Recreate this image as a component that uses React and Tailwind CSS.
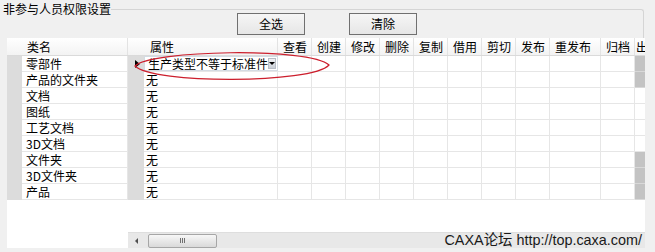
import React from "react";

const rows = ["零部件", "产品的文件夹", "文档", "图纸", "工艺文档", "3D文档", "文件夹", "3D文件夹", "产品"];

// permission columns, widths written out so Tailwind picks them up
const permCols = [
    { label: "查看", w: "w-[34px]" },
    { label: "创建", w: "w-[34px]" },
    { label: "修改", w: "w-[34px]" },
    { label: "删除", w: "w-[34px]" },
    { label: "复制", w: "w-[34px]" },
    { label: "借用", w: "w-[34px]" },
    { label: "剪切", w: "w-[34px]" },
    { label: "发布", w: "w-[34px]" },
    { label: "重发布", w: "w-[51px]" },
    { label: "归档", w: "w-[34px]" },
];

// rows where the clipped last column shows grey
const greyTail = [0, 1, 6, 7, 8];

function Button({ children }) {
    return (
        <button className="w-[68px] h-[22px] border border-[#707070] bg-gradient-to-b from-[#f6f6f6] to-[#e6e6e6] text-[12px] leading-[20px] text-black">
            {children}
        </button>
    );
}

export default function App() {
    return (
        <div className="relative w-[655px] h-[252px] bg-[#f0f0f0] overflow-hidden font-['Noto_Sans_CJK_SC',sans-serif] text-black text-[12px]">
            {/* group box header */}
            <div className="flex h-[38px]">
                <span className="ml-[3px] mt-[1px] leading-[16px] whitespace-nowrap">非参与人员权限设置</span>
                <div className="flex-1 mr-[11px] mt-[9px] border-t border-r border-[#d5d5d5] rounded-tr-[3px]">
                    <div className="flex gap-[44px] pl-[126px] pt-[3px]">
                        <Button>全选</Button>
                        <Button>清除</Button>
                    </div>
                </div>
            </div>

            {/* grid */}
            <div className="ml-[7px] w-[638px] h-[210px] bg-white flex flex-col overflow-hidden">
                <div className="flex h-[18px] shrink-0 bg-gradient-to-b from-white to-[#f3f3f3] border-b border-[#dadada] leading-[18px]">
                    <div className="w-[121px] shrink-0 pl-[20px] border-r border-[#e3e3e3]">类名</div>
                    <div className="w-[150px] shrink-0 pl-[22px] border-r border-[#e3e3e3]">属性</div>
                    {permCols.map((c) => (
                        <div key={c.label} className={`${c.w} shrink-0 pl-[5px] border-r border-[#e3e3e3] whitespace-nowrap`}>
                            {c.label}
                        </div>
                    ))}
                    <div className="w-[10px] shrink-0 pl-[1px] overflow-hidden whitespace-nowrap">出库</div>
                </div>

                {rows.map((name, i) => (
                    <div key={name} className="flex h-[16px] shrink-0 leading-[16px]">
                        <div className="w-[15px] shrink-0 bg-[#dcdcdc]" />
                        <div className="w-[106px] shrink-0 pl-[4px] border-r border-b border-[#e6e6e6] whitespace-nowrap">{name}</div>
                        <div className="w-[16px] shrink-0 bg-[#dcdcdc] flex items-center pl-[7px]">
                            {i === 0 && (
                                <span className="w-0 h-0 border-y-[4px] border-y-transparent border-l-[5px] border-l-black" />
                            )}
                        </div>
                        {i === 0 ? (
                            <div className="w-[134px] shrink-0 flex items-center border-b border-[#e6e6e6]">
                                <div className="flex items-center w-[134px] h-[15px] border border-[#d4dbe3] pl-[3px]">
                                    <span className="flex-1 whitespace-nowrap leading-[13px]">生产类型不等于标准件</span>
                                    <span className="w-[11px] h-[11px] mr-[1px] flex items-center justify-center bg-gradient-to-b from-[#f0f2f5] to-[#c9ced6] border border-[#b8bec7]">
                                        <span className="w-0 h-0 border-x-[3px] border-x-transparent border-t-[3px] border-t-black" />
                                    </span>
                                </div>
                            </div>
                        ) : (
                            <div className="w-[134px] shrink-0 pl-[2px] border-r border-b border-[#e6e6e6]">无</div>
                        )}
                        {permCols.map((c) => (
                            <div key={c.label} className={`${c.w} shrink-0 border-r border-b border-[#e6e6e6]`} />
                        ))}
                        <div
                            className={`w-[10px] shrink-0 border-b ${greyTail.includes(i) ? "bg-[#c3c3c3] border-[#d8d8d8]" : "border-[#e6e6e6]"}`}
                        />
                    </div>
                ))}

                <div className="flex-1" />

                {/* horizontal scrollbar with forum watermark */}
                <div className="flex h-[16px] shrink-0">
                    <div className="w-[121px] shrink-0" />
                    <div className="flex-1 flex items-center bg-[#e8e8e8] border-t border-[#dedede]">
                        <span className="ml-[7px] w-0 h-0 border-y-[3px] border-y-transparent border-r-[3px] border-r-[#505050]" />
                        <div className="ml-[10px] w-[69px] h-[14px] rounded-[2px] border border-[#a6a6a6] bg-gradient-to-b from-[#f7f7f7] to-[#d9d9d9] flex items-center justify-center gap-[1px]">
                            <span className="w-px h-[5px] bg-[#707070]" />
                            <span className="w-px h-[5px] bg-[#707070]" />
                            <span className="w-px h-[5px] bg-[#707070]" />
                        </div>
                        <span className="ml-auto mr-[3px] text-[14.4px] leading-[15px] text-[#1a1a1a] font-['Liberation_Sans','Noto_Sans_CJK_SC',sans-serif] whitespace-nowrap">
                            CAXA论坛 http://top.caxa.com/
                        </span>
                    </div>
                </div>
            </div>

            {/* red annotation ring */}
            <svg className="absolute left-0 top-0 pointer-events-none" width="655" height="252">
                <path
                    d="M135 66 C150 50 310 47 329 65 C312 84 152 84 135 66 Z"
                    fill="none"
                    stroke="#cc1f2d"
                    strokeWidth="1.2"
                />
            </svg>
        </div>
    );
}
